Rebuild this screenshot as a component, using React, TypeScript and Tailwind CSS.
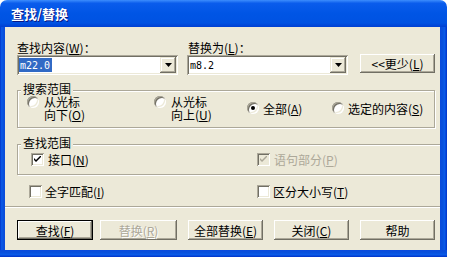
import type { ReactNode } from 'react';

const raised =
  'shadow-[inset_-1px_-1px_0_#716f64,inset_1px_1px_0_#fff,inset_-2px_-2px_0_#aca899,inset_2px_2px_0_#ece9d8]';

function U({ c }: { c: string }) {
  return <span className="underline underline-offset-[1px]">{c}</span>;
}

function DropButton() {
  return (
    <div className="flex h-[16px] w-[16px] items-center justify-center bg-[#ece9d8] shadow-[inset_-1px_-1px_0_#716f64,inset_1px_1px_0_#ece9d8,inset_-2px_-2px_0_#aca899,inset_2px_2px_0_#fff]">
      <svg width="7" height="4" viewBox="0 0 7 4">
        <path d="M0 0H7L3.5 4Z" fill="#000" />
      </svg>
    </div>
  );
}

function Combo({ value, selected }: { value: string; selected?: boolean }) {
  return (
    <div className="flex h-[20px] w-[161px] bg-white p-[2px] shadow-[inset_1px_1px_0_#aca899,inset_-1px_-1px_0_#fff,inset_2px_2px_0_#716f64,inset_-2px_-2px_0_#ece9d8]">
      <div className="flex flex-1 items-center">
        <span
          className={
            selected
              ? "flex h-[14px] items-center bg-[#316ac5] pl-[1px] pr-[2px] font-['DejaVu_Sans_Mono',monospace] text-[10px] text-white"
              : "flex h-[14px] items-center pl-[1px] font-['DejaVu_Sans_Mono',monospace] text-[10px] text-black"
          }
        >
          {value}
        </span>
      </div>
      <DropButton />
    </div>
  );
}

function Radio({ checked }: { checked?: boolean }) {
  return (
    <div className="flex h-[12px] w-[12px] shrink-0 items-center justify-center rounded-full bg-white shadow-[inset_1px_1px_0_#aca899,inset_-1px_-1px_0_#fff,inset_2px_2px_0_#716f64,inset_-2px_-2px_0_#ece9d8]">
      {checked && <div className="h-[4px] w-[4px] rounded-full bg-black" />}
    </div>
  );
}

function Check({ checked, disabled }: { checked?: boolean; disabled?: boolean }) {
  return (
    <div
      className={
        (disabled ? 'bg-[#ece9d8] ' : 'bg-white ') +
        'flex h-[13px] w-[13px] shrink-0 items-center justify-center shadow-[inset_1px_1px_0_#aca899,inset_-1px_-1px_0_#fff,inset_2px_2px_0_#716f64,inset_-2px_-2px_0_#ece9d8]'
      }
    >
      {checked && (
        <svg width="7" height="7" viewBox="0 0 7 7">
          <path d="M0 2V4L2 6L7 1V-1L2 4Z" fill={disabled ? '#aca899' : '#000'} />
        </svg>
      )}
    </div>
  );
}

function Button({
  children,
  width,
  isDefault,
  disabled,
}: {
  children: ReactNode;
  width: string;
  isDefault?: boolean;
  disabled?: boolean;
}) {
  const text = disabled ? 'text-[#aca899] [text-shadow:1px_1px_0_#fff]' : 'text-black';
  if (isDefault) {
    return (
      <div className={width + ' h-[20px] border border-black'}>
        <div className={raised + ' flex h-full items-center justify-center bg-[#ece9d8] ' + text}>
          {children}
        </div>
      </div>
    );
  }
  return (
    <div className={width + ' ' + raised + ' flex h-[20px] items-center justify-center bg-[#ece9d8] ' + text}>
      {children}
    </div>
  );
}

function GroupBox({ title, className, children }: { title: string; className: string; children: ReactNode }) {
  return (
    <div
      className={
        'relative border border-[#aca899] shadow-[inset_1px_1px_0_#fff,1px_1px_0_#fff] ' + className
      }
    >
      <span className="absolute left-[3px] top-[-8px] bg-[#ece9d8] px-[2px] leading-[12px]">{title}</span>
      {children}
    </div>
  );
}

export default function App() {
  return (
    <div className="h-[257px] w-[449px] overflow-hidden bg-white font-['Noto_Sans_CJK_SC','Noto_Sans',sans-serif] text-[12px] leading-[13px] text-black">
      <div className="w-[447px]">
        {/* Title bar */}
        <div className="flex h-[27px] items-center rounded-t-[7px] bg-[linear-gradient(to_bottom,#3c8dfd_0%,#0a5cec_12%,#0055e5_50%,#0052e2_85%,#003fd2_100%)] pl-[11px]">
          <span className="text-[13px] font-bold leading-[15px] text-white [text-shadow:1px_1px_0_#0a1883]">
            查找/替换
          </span>
        </div>

        <div className="flex">
          <div className="w-[5px] bg-[linear-gradient(to_right,#0032c8,#0a5ae8,#0850dc,#0a4adc)]" />

          {/* Client area */}
          <div className="flex h-[223px] w-[435px] flex-col overflow-hidden bg-[#ece9d8]">
            <div className="flex items-start pt-[14px]">
              <div className="ml-[12px] flex flex-col">
                <div className="h-[14px] leading-[14px]">
                  查找内容(<U c="W" />)：
                </div>
                <Combo value="m22.0" selected />
              </div>
              <div className="ml-[9px] flex flex-col">
                <div className="h-[14px] pl-[1px] leading-[14px]">
                  替换为(<U c="L" />)：
                </div>
                <Combo value="m8.2" />
              </div>
              <div className="ml-[12px] mt-[13px]">
                <div className={raised + ' flex h-[19px] w-[75px] items-center justify-center bg-[#ece9d8]'}>
                  &lt;&lt;更少(<U c="L" />)
                </div>
              </div>
            </div>

            <GroupBox title="搜索范围" className="ml-[12px] mt-[15px] h-[38px] w-[418px] pt-[4px]">
              <div className="flex h-[26px] items-center">
                <div className="ml-[9px] flex w-[127px] items-start">
                  <div className="mt-[1px]">
                    <Radio />
                  </div>
                  <p className="ml-[5px]">
                    从光标
                    <br />
                    向下(<U c="O" />)
                  </p>
                </div>
                <div className="flex w-[93px] items-start">
                  <div className="mt-[1px]">
                    <Radio />
                  </div>
                  <p className="ml-[5px]">
                    从光标
                    <br />
                    向上(<U c="U" />)
                  </p>
                </div>
                <div className="flex w-[85px] items-center">
                  <Radio checked />
                  <span className="ml-[4px]">
                    全部(<U c="A" />)
                  </span>
                </div>
                <div className="flex items-center">
                  <Radio />
                  <span className="ml-[4px]">
                    选定的内容(<U c="S" />)
                  </span>
                </div>
              </div>
            </GroupBox>

            <GroupBox title="查找范围" className="ml-[12px] mt-[16px] flex h-[31px] w-[440px] shrink-0 items-center">
              <div className="ml-[13px] flex w-[226px] items-center">
                <Check checked />
                <span className="ml-[4px]">
                  接口(<U c="N" />)
                </span>
              </div>
              <div className="flex items-center">
                <Check checked disabled />
                <span className="ml-[4px] text-[#aca899]">
                  语句部分(<U c="P" />)
                </span>
              </div>
            </GroupBox>

            <div className="mt-[10px] flex h-[13px] items-center">
              <div className="ml-[24px] flex w-[228px] items-center">
                <Check />
                <span className="ml-[3px]">
                  全字匹配(<U c="I" />)
                </span>
              </div>
              <div className="flex items-center">
                <Check />
                <span className="ml-[3px]">
                  区分大小写(<U c="T" />)
                </span>
              </div>
            </div>

            <div className="mt-[8px] h-[2px] border-t border-b border-t-[#aca899] border-b-white" />

            <div className="mt-[12px] flex">
              <div className="ml-[12px]">
                <Button width="w-[76px]" isDefault>
                  查找(<U c="F" />)
                </Button>
              </div>
              <div className="ml-[7px]">
                <Button width="w-[77px]" disabled>
                  替换(<U c="R" />)
                </Button>
              </div>
              <div className="ml-[11px]">
                <Button width="w-[75px]">
                  全部替换(<U c="E" />)
                </Button>
              </div>
              <div className="ml-[11px]">
                <Button width="w-[75px]">
                  关闭(<U c="C" />)
                </Button>
              </div>
              <div className="ml-[11px]">
                <Button width="w-[75px]">帮助</Button>
              </div>
            </div>
          </div>

          <div className="w-[7px] bg-[linear-gradient(to_right,#0a4adc,#0850dc,#0a5ae8,#0032c8)]" />
        </div>
        <div className="h-[7px] bg-[linear-gradient(to_bottom,#0a4adc,#0850dc,#0a5ae8,#0032c8)]" />
      </div>
    </div>
  );
}
